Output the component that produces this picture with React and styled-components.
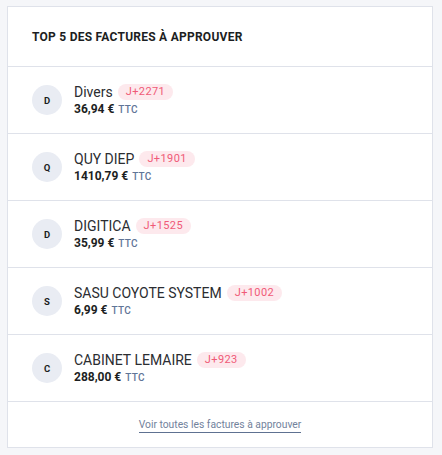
import React from "react";
import styled, { createGlobalStyle } from "styled-components";

const Global = createGlobalStyle`
  html, body { margin: 0; padding: 0; background: #f5f6f9; }
  body { font-family: Roboto, "Noto Sans", sans-serif; }
`;

const Page = styled.div`
  padding: 6px 0 0 7px;
`;

const Card = styled.section`
  width: 424px;
  background: #fff;
  border: 1px solid #dfe2ea;
  display: flex;
  flex-direction: column;
`;

const Header = styled.header`
  height: 59px;
  display: flex;
  align-items: center;
  padding-left: 24px;
  border-bottom: 1px solid #dfe2ea;
`;

const Title = styled.h2`
  margin: 0;
  font-size: 12px;
  font-weight: 700;
  color: #1c1e22;
  letter-spacing: 0.25px;
`;

const Row = styled.div`
  height: 66px;
  display: flex;
  align-items: center;
  gap: 12px;
  padding-left: 24px;
  border-bottom: 1px solid #dfe2ea;
`;

const Avatar = styled.div`
  width: 30px;
  height: 30px;
  border-radius: 50%;
  background: #e9ecf3;
  display: flex;
  align-items: center;
  justify-content: center;
  font-size: 9.5px;
  font-weight: 700;
  color: #1c1e22;
  flex-shrink: 0;
`;

const Info = styled.div`
  display: flex;
  flex-direction: column;
  gap: 1px;
`;

const NameLine = styled.div`
  display: flex;
  align-items: center;
  gap: 5px;
`;

const Name = styled.span`
  font-size: 14px;
  color: #2b2d31;
  line-height: 17px;
`;

const Badge = styled.span`
  height: 16px;
  padding: 0 8px;
  border-radius: 8px;
  background: #fde9ed;
  color: #f05a77;
  font-size: 11px;
  line-height: 16px;
  letter-spacing: 0.4px;
`;

const Amount = styled.div`
  font-size: 12px;
  font-weight: 700;
  color: #1c1e22;
  line-height: 15px;
`;

const Tax = styled.span`
  font-size: 10px;
  font-weight: 500;
  color: #5f7597;
  margin-left: 4px;
  letter-spacing: 0.3px;
`;

const Footer = styled.footer`
  height: 45px;
  display: flex;
  align-items: center;
  justify-content: center;
`;

const Link = styled.a`
  font-size: 10.3px;
  color: #72829c;
  text-decoration: none;
  border-bottom: 1px solid #5e7191;
  padding-bottom: 1px;
  margin-top: 2px;
  cursor: pointer;
`;

const invoices = [
  { letter: "D", name: "Divers", days: "J+2271", amount: "36,94 €" },
  { letter: "Q", name: "QUY DIEP", days: "J+1901", amount: "1410,79 €" },
  { letter: "D", name: "DIGITICA", days: "J+1525", amount: "35,99 €" },
  { letter: "S", name: "SASU COYOTE SYSTEM", days: "J+1002", amount: "6,99 €" },
  { letter: "C", name: "CABINET LEMAIRE", days: "J+923", amount: "288,00 €" },
];

export default function App() {
  return (
    <>
      <Global />
      <Page>
        <Card>
          <Header>
            <Title>TOP 5 DES FACTURES À APPROUVER</Title>
          </Header>
          {invoices.map((inv, i) => (
            <Row key={i}>
              <Avatar>{inv.letter}</Avatar>
              <Info>
                <NameLine>
                  <Name>{inv.name}</Name>
                  <Badge>{inv.days}</Badge>
                </NameLine>
                <Amount>
                  {inv.amount}
                  <Tax>TTC</Tax>
                </Amount>
              </Info>
            </Row>
          ))}
          <Footer>
            <Link>Voir toutes les factures à approuver</Link>
          </Footer>
        </Card>
      </Page>
    </>
  );
}
